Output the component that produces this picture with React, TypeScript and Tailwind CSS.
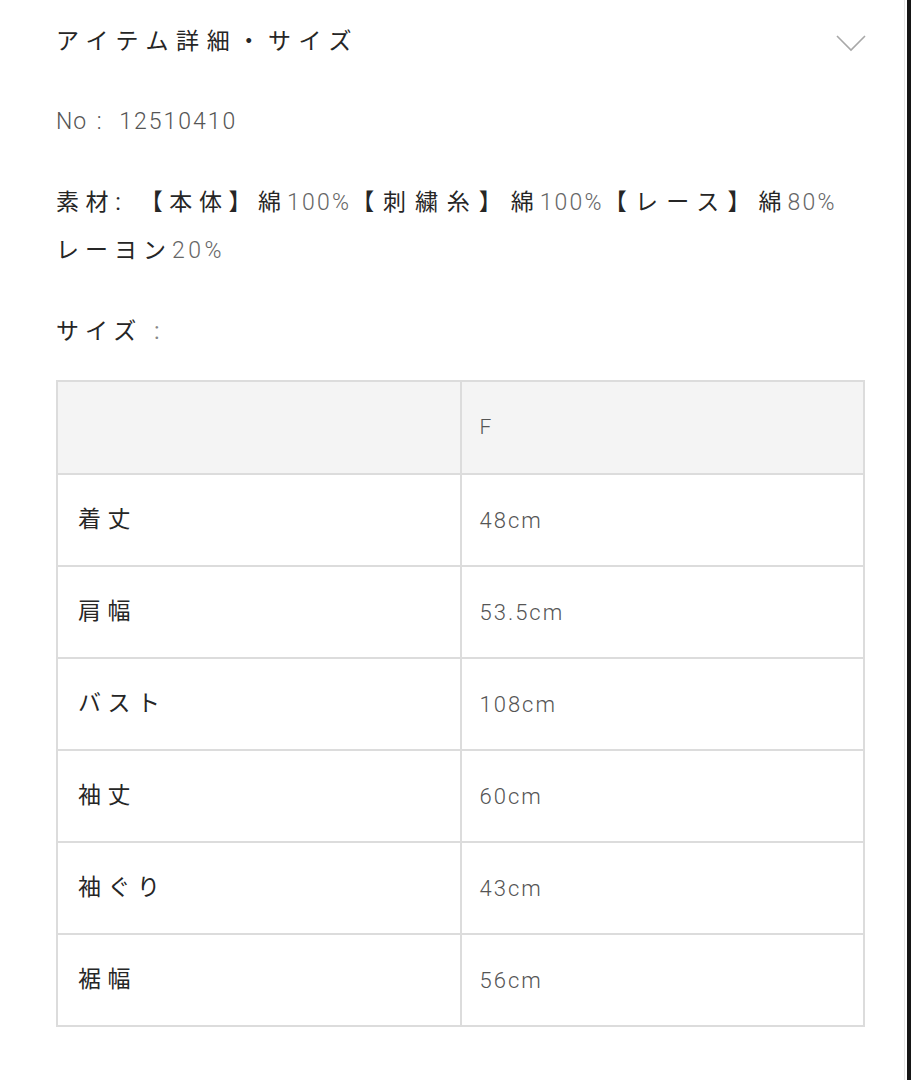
import React from "react";

const jp = "font-['Roboto','Noto_Sans_CJK_JP',sans-serif]";

const rows: [string, string][] = [
  ["着丈", "48cm"],
  ["肩幅", "53.5cm"],
  ["バスト", "108cm"],
  ["袖丈", "60cm"],
  ["袖ぐり", "43cm"],
  ["裾幅", "56cm"],
];

const Num = ({ children }: { children: React.ReactNode }) => (
  <span className="text-[#666] tracking-[2.2px] font-light">{children}</span>
);

export default function App() {
  return (
    <div className={`flex w-[911px] min-h-[1080px] bg-white ${jp}`}>
      <div className="w-[905px] border-r border-[#e6e6e6] pl-[56px] pr-[39px] pt-[24px]">
        <div className="flex items-center justify-between h-[36px]">
          <div className="text-[23px] leading-[36px] tracking-[7.6px] text-[#262626]">アイテム詳細・サイズ</div>
          <svg width="30" height="18" viewBox="0 0 30 18" className="mr-[-1px] mt-[2px]">
            <path d="M1 2 L15 16 L29 2" fill="none" stroke="#a8a8a8" strokeWidth="1.6" />
          </svg>
        </div>
        <div className="mt-[44px] text-[23px] leading-[36px] tracking-[2px] text-[#555] font-light">
          <span className="tracking-[1px]">No</span> <span className="ml-[2px] mr-[8px]">:</span> 12510410
        </div>
        <div className="mt-[39px] text-[23px] leading-[48px] tracking-[6px] text-[#262626]">
          <div>
            <span className="tracking-[6.6px]">素材: 【本体】</span>綿<Num>100%</Num>
            <span className="tracking-[8.9px]">【刺繍糸】</span>綿<Num>100%</Num>
            <span className="tracking-[8.2px]">【レース】</span>綿<Num>80%</Num>
          </div>
          <div>
            レーヨン<span className="text-[#666] tracking-[3.5px] font-light">20%</span>
          </div>
        </div>
        <div className="mt-[39px] text-[23px] leading-[36px] tracking-[6px] text-[#262626]">
          サイズ <span className="text-[#888]">:</span>
        </div>
        <table className="mt-[30px] w-[809px] border-collapse border-2 border-[#dcdcdc] table-fixed">
          <tbody>
            <tr className="h-[93px] bg-[#f4f4f4]">
              <td className="border-2 border-[#dcdcdc] w-1/2"></td>
              <td className="border-2 border-[#dcdcdc] w-1/2 pl-[18px] text-[21px] tracking-[3px] text-[#555] font-light">F</td>
            </tr>
            {rows.map(([k, v]) => (
              <tr key={k} className="h-[92px]">
                <td className="border-2 border-[#dcdcdc] pl-[20px] text-[23px] tracking-[6.5px] text-[#262626]">{k}</td>
                <td className="border-2 border-[#dcdcdc] pl-[18px] text-[22px] tracking-[2px] text-[#555] font-light">{v}</td>
              </tr>
            ))}
          </tbody>
        </table>
      </div>
      <div className="w-[2px]"></div>
      <div className="w-[4px] bg-[#161616]"></div>
    </div>
  );
}
